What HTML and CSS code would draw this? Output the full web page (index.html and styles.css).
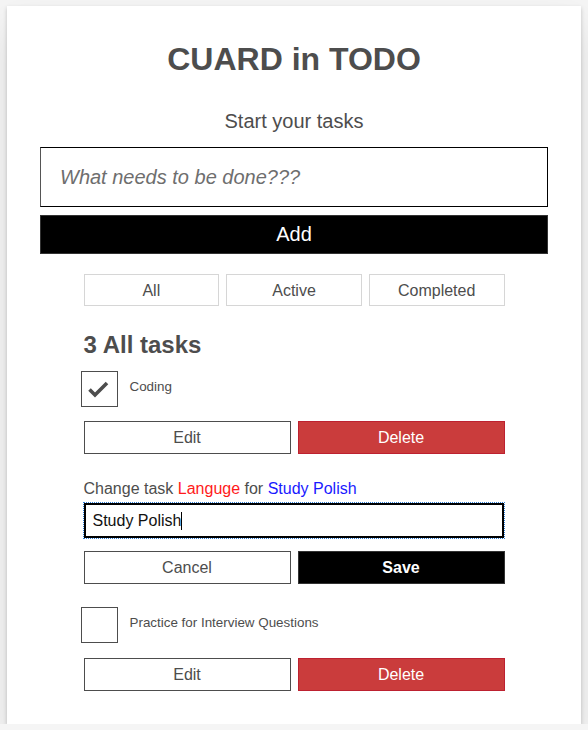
FILE: index.html
```html
<!DOCTYPE html>
<html lang="en">
<head>
<meta charset="utf-8">
<title>CUARD in TODO</title>
<link rel="stylesheet" href="styles.css">
</head>
<body>
<div class="todoapp">
  <h1 class="title">CUARD in TODO</h1>
  <form class="new-form">
    <h2 class="label-lg"><label for="new-todo">Start your tasks</label></h2>
    <input id="new-todo" class="input-lg" type="text" placeholder="What needs to be done???">
    <button type="button" class="btn-add">Add</button>
  </form>
  <div class="filters">
    <button type="button" class="btn-filter">All</button>
    <button type="button" class="btn-filter">Active</button>
    <button type="button" class="btn-filter">Completed</button>
  </div>
  <h2 class="list-heading">3 All tasks</h2>
  <ul class="todo-list">
    <li class="todo">
      <div class="todo-row">
        <span class="checkbox">
          <svg width="37" height="36" viewBox="0 0 37 36"><path d="M9.5 18.5 L15 24 L27 12" fill="none" stroke="#4d4d4d" stroke-width="3.6"/></svg>
        </span>
        <span class="todo-label">Coding</span>
      </div>
      <div class="btn-group">
        <button type="button" class="btn btn-plain">Edit</button>
        <button type="button" class="btn btn-danger">Delete</button>
      </div>
    </li>
    <li class="todo">
      <div class="edit-label">Change task <span class="red">Languge</span> for <span class="blue">Study Polish</span></div>
      <div class="edit-field">
        <input class="edit-input" type="text" value="Study Polish">
        <span class="caret"></span>
      </div>
      <div class="btn-group">
        <button type="button" class="btn btn-plain">Cancel</button>
        <button type="button" class="btn btn-primary">Save</button>
      </div>
    </li>
    <li class="todo">
      <div class="todo-row">
        <span class="checkbox"></span>
        <span class="todo-label">Practice for Interview Questions</span>
      </div>
      <div class="btn-group">
        <button type="button" class="btn btn-plain">Edit</button>
        <button type="button" class="btn btn-danger">Delete</button>
      </div>
    </li>
  </ul>
</div>
</body>
</html>
```
FILE: styles.css
```css
* { box-sizing: border-box; }

html, body { margin: 0; padding: 0; }

body {
  background: #f5f5f5;
  font-family: Arial, "Liberation Sans", sans-serif;
  color: #4d4d4d;
  padding: 6px 7px 0 7px;
}

.todoapp {
  background: #fff;
  padding: 33px;
  box-shadow: 0 2px 4px 0 rgba(0,0,0,.2), 0 20px 40px 0 rgba(0,0,0,.1);
}

.title {
  margin: 0;
  font-size: 32px;
  line-height: 40px;
  font-weight: 700;
  text-align: center;
}

.new-form { margin: 0; }

.label-lg {
  margin: 30px 0 14px;
  font-size: 20px;
  line-height: 24px;
  font-weight: 400;
  text-align: center;
}

.input-lg {
  display: block;
  width: 100%;
  height: 60px;
  margin: 0;
  padding: 0 19px;
  border: 1px solid #000;
  border-left-color: #555;
  border-radius: 0;
  font-family: inherit;
  font-size: 20px;
  color: #4d4d4d;
  outline: none;
}

.input-lg::placeholder {
  color: #6e6e6e;
  font-style: italic;
}

.btn-add {
  display: block;
  width: 100%;
  height: 39px;
  margin-top: 8px;
  border: 1px solid #333;
  background: #000;
  color: #fff;
  font-family: inherit;
  font-size: 20px;
  padding: 0;
}

.filters {
  display: flex;
  gap: 7px;
  max-width: 421px;
  margin: 20px auto 0;
}

.btn-filter {
  flex: 1;
  height: 32px;
  border: 1px solid #d6d6d6;
  background: #fff;
  color: #4d4d4d;
  font-family: inherit;
  font-size: 16px;
  padding: 1px 0 0;
}

.list-heading {
  max-width: 421px;
  margin: 24px auto 11px;
  font-size: 24px;
  line-height: 30px;
  font-weight: 700;
}

.todo-list {
  list-style: none;
  max-width: 421px;
  margin: 0 auto;
  padding: 0;
  display: flex;
  flex-direction: column;
  gap: 24px;
}

.todo-row {
  display: flex;
  align-items: flex-start;
  margin-left: -3px;
}

.checkbox {
  flex: none;
  width: 37px;
  height: 36px;
  border: 1.5px solid #4d4d4d;
  display: block;
  position: relative;
}

.checkbox svg {
  position: absolute;
  left: -1.5px;
  top: -1.5px;
}

.todo-label {
  margin: 7px 0 0 12px;
  font-size: 13.4px;
  line-height: 18px;
}

.btn-group {
  display: flex;
  gap: 7px;
  margin-top: 14px;
}

.btn {
  flex: 1;
  height: 33px;
  padding: 0;
  font-family: inherit;
  font-size: 16px;
}

.btn-plain {
  background: #fff;
  border: 1px solid #4d4d4d;
  color: #4d4d4d;
}

.btn-danger {
  background: #ca3c3c;
  border: 1px solid #bd2130;
  color: #fff;
}

.btn-primary {
  background: #000;
  border: 1px solid #333;
  color: #fff;
  font-weight: 700;
}

.edit-label {
  font-size: 16px;
  line-height: 20px;
  margin-top: 1px;
}

.red { color: #ff1a1a; }
.blue { color: #1a1aff; }

.edit-field {
  position: relative;
  margin-top: 4px;
  margin-right: 1px;
}

.edit-input {
  display: block;
  width: 100%;
  height: 35px;
  margin: 0;
  padding: 0 7px;
  border: 2.5px solid #000;
  border-radius: 0;
  outline: 1px dotted #2f7fd6;
  outline-offset: 0;
  font-family: inherit;
  font-size: 16px;
  color: #111;
  background: #fff;
}

.caret {
  position: absolute;
  left: 97px;
  top: 9px;
  width: 1px;
  height: 18px;
  background: #000;
}

.todo:nth-child(2) .btn-group { margin-top: 13px; }
.todo:nth-child(3) { margin-top: -1px; }
.todo:nth-child(3) .btn-group { margin-top: 15px; }
```
